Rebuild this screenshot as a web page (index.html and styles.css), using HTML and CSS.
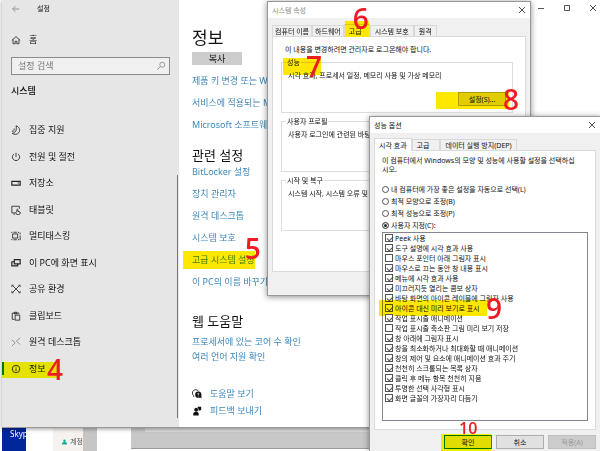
FILE: index.html
```html
<!DOCTYPE html>
<html lang="ko">
<head>
    <meta charset="UTF-8">
    <meta name="viewport" content="width=device-width, initial-scale=1.0">
    <title>고급 시스템 설정</title>
    <link rel="stylesheet" href="styles.css">
</head>
<body>
    <!-- Desktop behind the windows -->
    <div class="desktop">
        <div class="wallpaper">Skype</div>
        <div class="blank"></div>
        <div class="account">
            <svg class="person" viewBox="0 0 8 8"><circle cx="4" cy="2" r="2"/><path d="M0 8V6q0-2 4-2t4 2v2z"/></svg>계정
        </div>
        <div class="gutter"></div>
        <div class="blank wide"></div>
        <div class="back-window"></div>
    </div>

    <!-- Settings window -->
    <div class="window settings">
        <aside class="sidebar">
            <header class="app-title">
                <svg class="icon faint" viewBox="0 0 12 12"><path d="M10 6H2M5.500 2.500 2 6l3.500 3.500"/></svg>
                <span>설정</span>
            </header>
            <a class="home" href="#">
                <svg class="icon" viewBox="0 0 12 12"><path d="M1 6.500 6 2l5 4.500M2.500 5.500v5h2.500V7.500h2v3h2.500v-5"/></svg>
                <span>홈</span>
            </a>
            <label class="search">
                <input type="text" placeholder="설정 검색" aria-label="설정 검색">
                <svg class="icon faint" viewBox="0 0 12 12"><circle cx="7.500" cy="4.500" r="3"/><path d="M5.300 6.700 1.500 10.500"/></svg>
            </label>
            <h2>시스템</h2>
            <nav>
                <a href="#"><svg class="icon" viewBox="0 0 12 12"><path d="M6 1c4 1 5.500 5 3.500 8C8 11.500 4 12 1.500 10 5.500 9.500 7.500 5.500 6 1zM1 7.500l3-.5M3 5l2 0"/></svg><span>집중 지원</span></a>
                <a href="#"><svg class="icon" viewBox="0 0 12 12"><path d="M6 1v5M3.500 2.500a4.300 4.300 0 1 0 5 0"/></svg><span>전원 및 절전</span></a>
                <a href="#"><svg class="icon bold" viewBox="0 0 12 12"><path d="M1 4h10v4.500H1zM8 6h1.500"/></svg><span>저장소</span></a>
                <a href="#"><svg class="icon" viewBox="0 0 12 12"><path d="M5 9.500H1v-8h9v3M3 11h2M7 8V5.500q.7-1 1.300 0v2l2.700 1v2L9.500 11.500H7L5.500 9z"/></svg><span>태블릿</span></a>
                <a href="#"><svg class="icon" viewBox="0 0 12 12"><path d="M2 3.500h6v5H2zM1 1v1.500M3 1.500h4M9 1v1.500M1 9.500V11M3 10.500h4M9 9.500V11M11 2v2M11 5.500V11"/></svg><span>멀티태스킹</span></a>
                <a href="#"><svg class="icon bold" viewBox="0 0 12 12"><path d="M4 2h7v5H4zM4 4.500H1v5h7V7"/></svg><span>이 PC에 화면 표시</span></a>
                <a href="#"><svg class="icon" viewBox="0 0 12 12"><path d="M2 2l8 8M10 2 2 10M1 3.500V1.500h2M9 1.500h2v2M1 8.500v2h2M9 10.500h2v-2"/></svg><span>공유 환경</span></a>
                <a href="#"><svg class="icon" viewBox="0 0 12 12"><path d="M4 10H1.500V2.500h8V4M4 3.500V1.500h3v2zM5 5h5.500v6H5z"/></svg><span>클립보드</span></a>
                <a href="#"><svg class="icon faint" viewBox="0 0 12 12"><path d="M1 3.500 5 7l-4 4M11 1 6.500 5 11 9"/></svg><span>원격 데스크톱</span></a>
                <a href="#" class="current"><svg class="icon" viewBox="0 0 12 12"><circle cx="6" cy="6" r="4.500"/><path d="M6 5.200v3.500M6 3v1.200"/></svg><span>정보</span><i class="marker mark-info"></i><b class="step step-4">4</b></a>
            </nav>
        </aside>

        <main>
            <div class="scrollbar"></div>
            <h1>정보</h1>
            <button class="copy">복사</button>
            <div class="links">
                <a href="#">제품 키 변경 또는 Windows 버전 업그레이드</a>
                <a href="#">서비스에 적용되는 Microsoft 서비스 계약</a>
                <a href="#">Microsoft 소프트웨어 라이선스 약관 읽기</a>
            </div>
            <h2>관련 설정</h2>
            <div class="links">
                <a href="#">BitLocker 설정</a>
                <a href="#">장치 관리자</a>
                <a href="#">원격 데스크톱</a>
                <a href="#">시스템 보호</a>
                <a href="#" class="advanced">고급 시스템 설정<i class="marker mark-advanced"></i><b class="step step-5">5</b></a>
                <a href="#">이 PC의 이름 바꾸기(고급)</a>
            </div>
            <h2 class="web-help">웹 도움말</h2>
            <div class="links tight">
                <a href="#">프로세서에 있는 코어 수 확인</a>
                <a href="#">여러 언어 지원 확인</a>
            </div>
            <div class="support">
                <a href="#"><svg class="solid" viewBox="0 0 12 12"><path fill="none" stroke="#111" d="M2 9.500V8A4 4 0 1 1 8 3"/><circle cx="7.500" cy="6.800" r="3.700"/><path d="M8 9l3.500 2.500L11 7z"/><path fill="none" stroke="#fff" d="M6.500 5.800q1-1.500 2 0 0 .7-1 1.200M7.500 8v1"/></svg>도움말 보기</a>
                <a href="#"><svg class="solid" viewBox="0 0 12 12"><circle cx="5" cy="4.500" r="2.300"/><path d="M1.500 11.500V9Q2 7 5 7t3 2v2.500zM6.500 1H11v4H9.500L8 6V4.500z"/></svg>피드백 보내기</a>
            </div>
        </main>
        <div class="controls">
            <button aria-label="최소화"><svg viewBox="0 0 8 8"><path d="M1 4.500h6"/></svg></button>
            <button aria-label="최대화"><svg viewBox="0 0 8 8"><path d="M1.500 1.500h5v5h-5z"/></svg></button>
            <button aria-label="닫기"><svg viewBox="0 0 8 8"><path d="M1 1l6 6M7 1 1 7"/></svg></button>
        </div>
    </div>

    <!-- System properties -->
    <section class="window dialog properties">
        <header>
            <span>시스템 속성</span>
            <button class="close" aria-label="닫기"><svg viewBox="0 0 8 8"><path d="M1 1l6 6M7 1 1 7"/></svg></button>
        </header>
        <div class="tabs">
            <button>컴퓨터 이름</button>
            <button>하드웨어</button>
            <button class="selected">고급<i class="marker mark-tab"></i><b class="step step-6">6</b></button>
            <button>시스템 보호</button>
            <button>원격</button>
        </div>
        <div class="pane">
            <p>이 내용을 변경하려면 관리자로 로그온해야 합니다.</p>
            <fieldset>
                <legend>성능</legend>
                <i class="marker mark-legend"></i>
                <b class="step step-7">7</b>
                <div>시각 효과, 프로세서 일정, 메모리 사용 및 가상 메모리</div>
                <button class="push">설정(S)...</button>
                <i class="marker mark-button"></i>
                <b class="step step-8">8</b>
            </fieldset>
            <fieldset>
                <legend>사용자 프로필</legend>
                <div>사용자 로그인에 관련된 바탕 화면 설정</div>
            </fieldset>
            <fieldset>
                <legend>시작 및 복구</legend>
                <div>시스템 시작, 시스템 오류 및 디버깅 정보</div>
            </fieldset>
        </div>
    </section>

    <!-- Performance options -->
    <section class="window dialog performance">
        <header>
            <span>성능 옵션</span>
            <button class="close" aria-label="닫기"><svg viewBox="0 0 8 8"><path d="M1 1l6 6M7 1 1 7"/></svg></button>
        </header>
        <div class="tabs">
            <button class="selected">시각 효과</button>
            <button>고급</button>
            <button>데이터 실행 방지(DEP)</button>
        </div>
        <div class="pane">
            <p>이 컴퓨터에서 Windows의 모양 및 성능에 사용할 설정을 선택하십<br>시오.</p>
            <div class="choices">
                <label><input type="radio" name="effects">내 컴퓨터에 가장 좋은 설정을 자동으로 선택(L)</label>
                <label><input type="radio" name="effects">최적 모양으로 조정(B)</label>
                <label><input type="radio" name="effects">최적 성능으로 조정(P)</label>
                <label><input type="radio" name="effects" checked>사용자 지정(C):</label>
            </div>
            <div class="effects">
                <label><input type="checkbox" checked>Peek 사용</label>
                <label><input type="checkbox" checked>도구 설명에 시각 효과 사용</label>
                <label><input type="checkbox">마우스 포인터 아래 그림자 표시</label>
                <label><input type="checkbox" checked>마우스로 끄는 동안 창 내용 표시</label>
                <label><input type="checkbox" checked>메뉴에 시각 효과 사용</label>
                <label><input type="checkbox" checked>미끄러지듯 열리는 콤보 상자</label>
                <label><input type="checkbox" checked>바탕 화면의 아이콘 레이블에 그림자 사용</label>
                <label class="preview"><input type="checkbox" checked>아이콘 대신 미리 보기로 표시<i class="marker mark-preview"></i><b class="step step-9">9</b></label>
                <label><input type="checkbox" checked>작업 표시줄 애니메이션</label>
                <label><input type="checkbox">작업 표시줄 축소판 그림 미리 보기 저장</label>
                <label><input type="checkbox" checked>창 아래에 그림자 표시</label>
                <label><input type="checkbox" checked>창을 최소화하거나 최대화할 때 애니메이션</label>
                <label><input type="checkbox" checked>창의 제어 및 요소에 애니메이션 효과 주기</label>
                <label><input type="checkbox" checked>천천히 스크롤되는 목록 상자</label>
                <label><input type="checkbox" checked>클릭 후 메뉴 항목 천천히 지움</label>
                <label><input type="checkbox" checked>투명한 선택 사각형 표시</label>
                <label><input type="checkbox" checked>화면 글꼴의 가장자리 다듬기</label>
            </div>
        </div>
        <footer>
            <button class="push default">확인<i class="marker mark-ok"></i><b class="step step-10">10</b></button>
            <button class="push">취소</button>
            <button class="push" disabled>적용(A)</button>
        </footer>
    </section>
</body>
</html>
```

FILE: styles.css
```css
* {
    box-sizing: border-box;
}

body {
    margin: 0;
    height: 100vh;
    position: relative;
    overflow: hidden;
    background: #fff;
    color: #111;
    font-family: "Noto Sans", "Noto Sans CJK KR", sans-serif;
    font-size: 9px;
    line-height: 12px;
}

h1, h2, p {
    margin: 0;
    font-weight: normal;
}

a {
    color: inherit;
    text-decoration: none;
    white-space: nowrap;
}

button, input {
    font: inherit;
    color: inherit;
    margin: 0;
}

button {
    padding: 0;
    border: none;
    background: none;
    white-space: nowrap;
}

svg {
    display: block;
    flex: none;
    fill: none;
    stroke: #222;
}

/* Desktop strip */
.desktop {
    position: absolute;
    inset: auto 0 0 2px;
    height: 23px;
    display: flex;
    font-size: 8px;
}

.wallpaper {
    width: 24px;
    background: #00279a;
    color: #fff;
    overflow: hidden;
    padding-left: 8px;
}

.blank {
    width: 27px;
}

.blank.wide {
    width: 34px;
}

.account {
    width: 30px;
    padding: 8px 0 0 9px;
    display: flex;
    gap: 3px;
    overflow: hidden;
    white-space: nowrap;
    background: #f6f2ef;
    color: #555;
    font-size: 7px;
}

.person {
    width: 5px;
    height: 12px;
    fill: #1aae96;
    stroke: none;
}

.gutter {
    width: 14px;
    background: #c6c6c6;
}

.back-window {
    flex: 1;
    margin-bottom: 2px;
    background: #c8c8c8;
    border-bottom: 1px solid #999;
}

.back-window::before {
    content: "";
    display: block;
    height: 4px;
    margin-left: 14px;
    background: #dcdcdc;
}

/* Windows */
.window {
    position: absolute;
}

.settings {
    inset: 0 0 23px 2px;
    display: flex;
    background: #fff;
    border-bottom: 1px solid #999;
    box-shadow: 0 1px 4px rgba(0, 0, 0, 0.4);
}

.sidebar {
    width: 177px;
    padding: 2px 9px 45px;
    display: flex;
    flex-direction: column;
    background: #e6e6e6;
}

.icon {
    width: 10px;
    height: 10px;
}

.faint {
    stroke: #888;
}

.bold {
    stroke-width: 1.4;
}

.app-title, .home {
    display: flex;
    align-items: center;
    gap: 8px;
    height: 13px;
}

.app-title {
    gap: 16px;
    font-size: 7px;
}

.home {
    margin-top: 18px;
}

.search {
    display: flex;
    align-items: center;
    height: 18px;
    margin-top: 11px;
    padding: 0 3px 0 6px;
    border: 1px solid #8c8c8c;
    background: #f0f0f0;
}

.search input {
    flex: 1;
    min-width: 0;
    padding: 0;
    border: none;
    outline: none;
    background: none;
}

.search input::placeholder {
    color: #777;
}

.sidebar h2 {
    margin-top: 10px;
    font-size: 9px;
    font-weight: 500;
}

nav {
    flex: 1;
    display: grid;
    grid-auto-rows: 1fr;
    margin-top: 20px;
}

nav a {
    position: relative;
    display: flex;
    align-items: center;
    gap: 8px;
}

.current::before {
    content: "";
    position: absolute;
    left: -9px;
    width: 2px;
    height: 13px;
    background: #0078d7;
}

main {
    position: relative;
    flex: 1;
    padding: 25px 13px 0;
}

.scrollbar {
    position: absolute;
    left: -2px;
    top: 175px;
    bottom: 9px;
    width: 1px;
    background: #777;
}

h1 {
    margin-bottom: 2px;
    font-size: 17px;
    line-height: 25px;
}

.copy {
    display: block;
    width: 50px;
    height: 13px;
    line-height: 11px;
    background: #ccc;
}

main h2 {
    margin: 10px 0 1px;
    font-size: 13px;
    line-height: 18px;
}

.links {
    display: flex;
    flex-direction: column;
    align-items: flex-start;
    color: #3d88bb;
}

.links a {
    padding: 5px 0;
}

.copy + .links {
    margin-top: 5px;
}

h2 + .links {
    margin-top: -4px;
}

main .web-help {
    margin-top: 19px;
    margin-bottom: 4px;
}

.links.tight a {
    padding: 2px 0 1px;
}

h2 + .links.tight {
    margin-top: 0;
}

.advanced {
    position: relative;
}

.support {
    margin-top: 24px;
    display: grid;
    gap: 5px;
    color: #3d88bb;
}

.support a {
    display: flex;
    align-items: center;
    gap: 8px;
}

.solid {
    width: 10px;
    height: 10px;
    fill: #111;
    stroke: none;
}

.controls {
    position: absolute;
    top: 4px;
    right: 3px;
    display: flex;
    gap: 18px;
}

.controls svg, .close svg {
    width: 8px;
    height: 8px;
    stroke: #555;
}

/* Dialogs */
.dialog {
    display: flex;
    flex-direction: column;
    background: #f0f0f0;
    border: 1px solid #999;
    box-shadow: 0 1px 6px rgba(0, 0, 0, 0.45);
    font-size: 7px;
    line-height: 9px;
}

.dialog header {
    display: flex;
    justify-content: space-between;
    align-items: center;
    height: 16px;
    padding: 0 4px;
    background: #fff;
}

.properties {
    left: 267px;
    top: 1px;
    width: 264px;
    height: 295px;
    padding-bottom: 23px;
}

.properties header {
    color: #888;
}

.performance {
    inset: 116px -1px 0 369px;
    border-bottom: none;
}

.tabs {
    display: flex;
    align-items: flex-end;
    margin: 6px 4px 0;
}

.tabs button {
    position: relative;
    height: 11px;
    padding: 0 4px;
    border: 1px solid #d9d9d9;
    border-bottom: none;
    background: #f0f0f0;
}

.tabs .selected {
    height: 13px;
    background: #fff;
    margin-bottom: -1px;
    z-index: 1;
}

.properties .tabs button {
    padding: 0 2px;
}

.properties .tabs .selected {
    padding: 0 7px 0 4px;
}

.properties .tabs .selected ~ button {
    padding: 0 4px;
}

.pane {
    flex: 1;
    margin: 0 4px;
    padding: 8px;
    border: 1px solid #dadada;
    background: #fff;
}

.properties .pane > p {
    padding-left: 4px;
}

fieldset {
    position: relative;
    height: 55px;
    min-width: 0;
    margin: 4px 4px 0 0;
    padding: 4px 6px 0;
    border: 1px solid #dcdcdc;
    white-space: nowrap;
}

legend {
    padding: 0 1px;
    margin-left: -2px;
}

.push {
    position: relative;
    width: 48px;
    height: 14px;
    border: 1px solid #adadad;
    background: #e1e1e1;
}

fieldset .push {
    display: block;
    margin: 12px 0 0 auto;
}

/* Performance options */
.performance .tabs {
    margin-top: 5px;
}

.performance .tabs button + button {
    padding: 0 10px 0 4px;
}

.performance .tabs button:last-child {
    padding: 0 4px;
}

.performance .pane {
    padding: 5px 7px 8px;
    display: flex;
    flex-direction: column;
}

.performance p {
    white-space: nowrap;
}

.choices {
    display: grid;
    margin-top: 9px;
}

.choices label, .effects label {
    display: flex;
    align-items: center;
    gap: 2px;
    height: 12px;
    white-space: nowrap;
}

input[type="radio"], input[type="checkbox"] {
    appearance: none;
    flex: none;
    width: 8px;
    height: 8px;
    border: 1px solid #555;
    background: #fff;
}

input[type="radio"] {
    width: 7px;
    height: 7px;
    border-radius: 50%;
}

input[type="radio"]:checked {
    background: #222;
    box-shadow: inset 0 0 0 1px #fff;
}

input[type="checkbox"]:checked::before {
    content: "";
    display: block;
    width: 5px;
    height: 3px;
    margin: 1px 0 0 1px;
    border: solid #555;
    border-width: 0 0 1px 1px;
    transform: rotate(-45deg);
}

.effects {
    flex: 1;
    margin-top: 1px;
    padding: 0 2px;
    border: 1px solid #82878f;
}

.effects label {
    position: relative;
    height: 10px;
}

.performance footer {
    display: flex;
    justify-content: flex-end;
    gap: 4px;
    padding: 5px 4px 2px;
}

.default {
    border-color: #0078d7;
}

.push:disabled {
    color: #999;
    background: #ccc;
    border-color: #bfbfbf;
}

/* Highlighter and step numbers */
.marker {
    position: absolute;
    background: #ffe800;
    mix-blend-mode: multiply;
    pointer-events: none;
}

.step {
    position: absolute;
    z-index: 2;
    color: #ed1c24;
    font: 600 28px/20px "Open Sans", sans-serif;
    pointer-events: none;
}

.mark-info { inset: 6px 113px 4px -9px; background: #fffb00; }
.step-4 { left: 36px; top: 3px; }

.mark-advanced { inset: 2px 0 2px -9px; }
.step-5 { right: -6px; top: -11px; }

.mark-tab { inset: -4px 0 0 0; }
.step-6 { left: 8px; top: -17px; }

.mark-legend { left: 1px; top: -9px; width: 38px; height: 17px; }
.step-7 { left: 24px; top: -11px; }

.mark-button { right: 3px; bottom: 3px; width: 73px; height: 17px; }
.step-8 { right: -7px; bottom: 3px; }

.mark-preview { left: -6px; top: -3px; width: 108px; height: 16px; }
.step-9 { left: 101px; top: -5px; }

.mark-ok { inset: -2px 0 -3px -4px; background: #fffb00; }
.step-10 { left: 14px; top: -15px; font-size: 16px; line-height: 14px; }
```
